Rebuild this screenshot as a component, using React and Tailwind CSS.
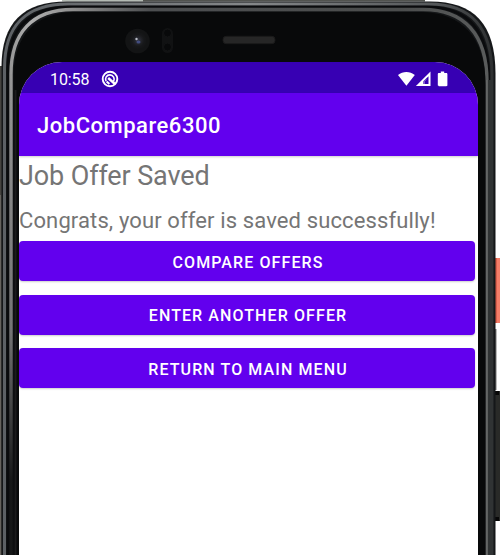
function PhoneFrame() {
  return (
    <svg className="absolute inset-0" width="500" height="555" viewBox="0 0 500 555" fill="none">
      <defs>
        <linearGradient id="outer" x1="0" x2="500" y1="0" y2="0" gradientUnits="userSpaceOnUse">
          <stop offset="0" stopColor="#5c6064" />
          <stop offset="0.5" stopColor="#85888a" />
          <stop offset="0.87" stopColor="#55585a" />
          <stop offset="1" stopColor="#292b2c" />
        </linearGradient>
        <linearGradient id="inner" x1="0" x2="500" y1="0" y2="0" gradientUnits="userSpaceOnUse">
          <stop offset="0" stopColor="#8a8a8a" />
          <stop offset="0.06" stopColor="#b0b0b0" />
          <stop offset="0.15" stopColor="#8c8c8c" />
          <stop offset="0.3" stopColor="#4c4e50" />
          <stop offset="0.8" stopColor="#4b4d4d" />
          <stop offset="1" stopColor="#5c5e5e" />
        </linearGradient>
        <linearGradient id="leftFade" x1="0" x2="0" y1="60" y2="555" gradientUnits="userSpaceOnUse">
          <stop offset="0" stopColor="#08090a" stopOpacity="0" />
          <stop offset="0.55" stopColor="#08090a" stopOpacity="0.25" />
          <stop offset="0.85" stopColor="#08090a" stopOpacity="0.9" />
        </linearGradient>
        <radialGradient id="lens">
          <stop offset="0" stopColor="#343746" />
          <stop offset="0.45" stopColor="#202126" />
          <stop offset="0.7" stopColor="#17181a" />
          <stop offset="1" stopColor="#141516" />
        </radialGradient>
      </defs>

      {/* antenna strips and side keys */}
      <path d="M62 .7H143" stroke="#b3bab3" strokeWidth="1.4" />
      <path d="M143 .7H425" stroke="#51534f" strokeWidth="1.4" />
      <path d="M0 66H3V555H0Z" fill="#45433f" />
      <path d="M0 195H1V555H0Z" fill="#65625d" />
      <path d="M495 258H500V323H495Z" fill="#f57e69" />
      <path d="M495 258H497V323H495Z" fill="#d95f4c" />
      <path d="M495 329H496.5V390H495Z" fill="#777" />
      <path d="M495 391H500V521H495Z" fill="#292a28" />
      <path d="M495 391H499V395H495ZM495 517H499V521H495Z" fill="#070707" />

      {/* nested metal rims */}
      <path d="M1.5 570V67C1.5 23 23 1.5 67 1.5H430C474 1.5 495.5 24 495.5 74V570Z" fill="#151719" />
      <path d="M4.5 570V68C4.5 26 26 4 68 4H429C471 4 492 27 492 75V570" stroke="url(#outer)" strokeWidth="3" />
      <path d="M7.8 570V70C7.8 29 29 7 70 7H427C467 7 488.7 30 488.7 78V570" stroke="#0a0b0d" strokeWidth="2.5" />
      <path d="M11 570V74C11 33 32 9.5 73 9.5H423C464 9.5 487 34 487 82V570" stroke="url(#inner)" strokeWidth="3.4" />
      <path d="M11 74V555" stroke="url(#leftFade)" strokeWidth="4" />
      <path d="M13.5 570V77C13.5 36 35 12 76 12H420C461 12 485.5 37 485.5 85V570Z" fill="#08090a" />
      <path d="M490.5 80V555" stroke="#303334" strokeWidth="5" />
      <path d="M486.8 80V555" stroke="#696b6b" strokeWidth="1" />
      <path d="M15.5 90V555" stroke="#1b1b1c" strokeWidth="2" />

      {/* front camera, sensors and speaker */}
      <circle cx="137.5" cy="41" r="12.3" fill="#131415" />
      <circle cx="138" cy="40.5" r="8.5" fill="url(#lens)" />
      <circle cx="136.5" cy="39" r="1.2" fill="#b9bdc7" />
      <ellipse cx="138.5" cy="42" rx="2" ry="1.5" fill="#424d80" />
      <rect x="162" y="28" width="11" height="25" rx="5.5" fill="#111213" />
      <circle cx="167.5" cy="33" r="4" fill="#08090a" stroke="#131415" />
      <circle cx="167.5" cy="47" r="4" fill="#08090a" stroke="#131415" />
      <rect x="223" y="36.3" width="52" height="7.4" rx="3.2" fill="#262626" stroke="#1a1a1a" />
    </svg>
  );
}

function StatusBar() {
  return (
    <div className="flex h-[31px] items-center bg-[#3700b3] pl-[31px] pr-[29px] pt-[3px] text-white">
      <span className="w-[51px] pt-px text-[16px] leading-none tracking-[-0.1px]">10:58</span>
      <svg width="18" height="18" viewBox="0 0 18 18" fill="none" stroke="white">
        <circle cx="9" cy="9" r="7.3" strokeWidth="1.9" />
        <path d="M5.1 11.2A4.3 4.3 0 1 1 12.6 11.3" strokeWidth="1.6" />
        <path d="M7.2 8L14 14" strokeWidth="2.4" />
        <path d="M5.6 11.4L8.4 14" strokeWidth="2" />
      </svg>
      <div className="ml-auto flex items-center">
        <svg width="51" height="17" viewBox="0 0 51 17" fill="white">
          <path d="M0 4C4.8 .1 12 .1 16.8 4L8.4 14.7Z" />
          <path d="M32.5 .4V15H17.9Z" />
          <path d="M30.5 5.2V12.9H25.4V10.3Z" fill="#3700b3" />
          <path d="M28.3 8.3L26.5 10.4V13" stroke="white" strokeWidth="0.6" fill="none" opacity="0.6" />
          <path d="M42.8 .5H46.2V2H48.2C49 2 49.4 2.5 49.4 3.2V14C49.4 14.8 49 15.2 48.2 15.2H41C40.2 15.2 39.8 14.8 39.8 14V3.2C39.8 2.5 40.2 2 41 2H42.8Z" />
        </svg>
      </div>
    </div>
  );
}

function ActionButton({ children }) {
  return (
    <button className="flex h-10 w-[456px] items-center justify-center rounded-[4px] bg-[#6200ee] pl-[2px] pt-[3px] text-[16px] font-medium tracking-[1.1px] text-white shadow-[0_1px_2px_rgba(0,0,0,0.2)]">
      {children}
    </button>
  );
}

export default function App() {
  return (
    <div className="relative h-[555px] w-[500px] overflow-hidden bg-white pl-[19px] pt-[62px] font-['Roboto',sans-serif]">
      <PhoneFrame />
      <main className="relative h-[493px] w-[459px] overflow-hidden rounded-t-[43px] bg-white">
        <StatusBar />
        <header className="flex h-[62.5px] items-center bg-[#6200ee] pl-[18px] pt-[3px] shadow-[0_1px_2px_rgba(0,0,0,0.2)]">
          <h1 className="text-[22px] font-medium tracking-[0.52px] text-white">JobCompare6300</h1>
        </header>
        <section className="text-[#757575]">
          <h2 className="h-[47.5px] whitespace-nowrap pt-[4px] text-[27px] leading-[32px] tracking-[-0.12px]">Job Offer Saved</h2>
          <p className="h-[38.3px] whitespace-nowrap pt-[4px] text-[22px] leading-[27px] tracking-[0.12px]">Congrats, your offer is saved successfully!</p>
          <div className="flex flex-col gap-[13.5px]">
            <ActionButton>COMPARE OFFERS</ActionButton>
            <ActionButton>ENTER ANOTHER OFFER</ActionButton>
            <ActionButton>RETURN TO MAIN MENU</ActionButton>
          </div>
        </section>
      </main>
    </div>
  );
}
